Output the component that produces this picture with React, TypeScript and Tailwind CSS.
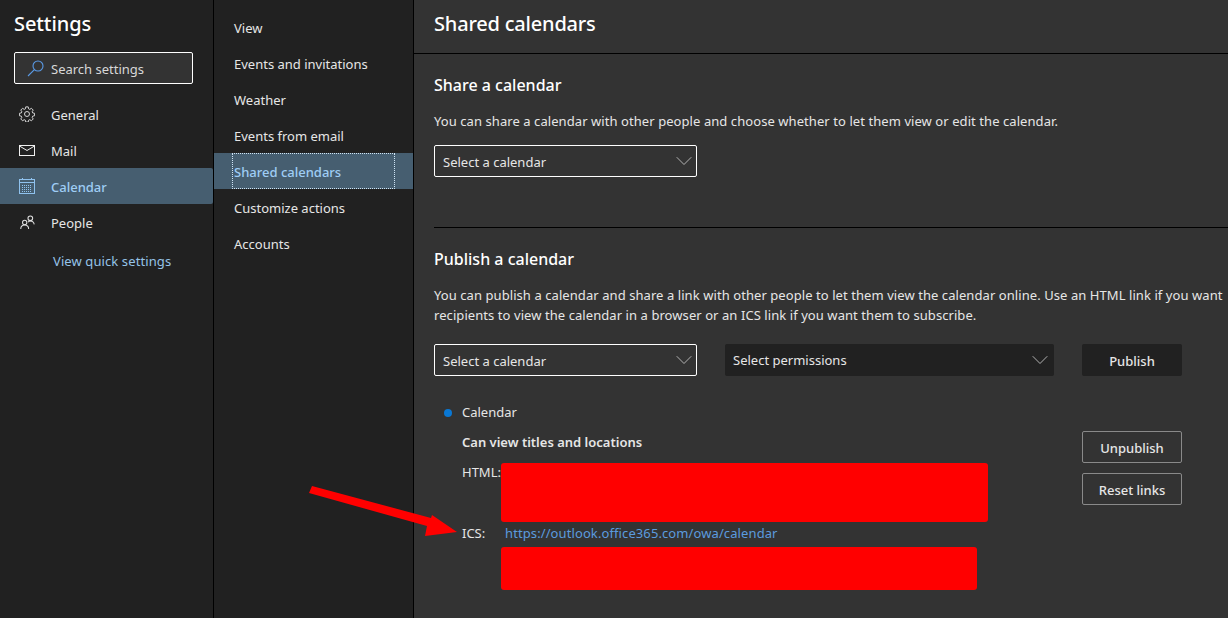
import { ChevronDown } from "lucide-react";

const font = { fontFamily: '"Noto Sans", "Open Sans", sans-serif' };

function Gear() {
  return (
    <svg width="16" height="16" viewBox="0 0 18 18" fill="none" stroke="#d8d8d8" strokeWidth="1.1">
      <circle cx="9" cy="9" r="2.8" />
      <path d="M7.6 1h2.8l.4 2.2 1.3.6 1.9-1.2 2 2-1.2 1.9.6 1.3 2.1.4v2.8l-2.1.4-.6 1.3 1.2 1.9-2 2-1.9-1.2-1.3.6-.4 2.1H7.6l-.4-2.1-1.3-.6L4 16.6l-2-2 1.2-1.9-.6-1.3L.5 11V8.2l2.1-.4.6-1.3L2 4.6l2-2 1.9 1.2 1.3-.6z" />
    </svg>
  );
}

function MailIcon() {
  return (
    <svg width="16" height="11" viewBox="0 0 16 11" fill="none" stroke="#f0f0f0" strokeWidth="1">
      <rect x="0.5" y="0.5" width="15" height="10" />
      <path d="M0.5 1l7.5 4.5 7.5-4.5" />
    </svg>
  );
}

function CalendarIcon() {
  return (
    <svg width="16" height="16" viewBox="0 0 16 16" fill="none" stroke="#8fc2ee" strokeWidth="1">
      <rect x="0.5" y="1.5" width="15" height="14" />
      <path d="M0.5 4.5h15M3.5 0v2M12.5 0v2" />
      <path d="M3 7.5h10M3 9.5h10M3 11.5h10M3 13.5h10" strokeDasharray="1 1" />
    </svg>
  );
}

function PeopleIcon() {
  return (
    <svg width="15" height="15" viewBox="0 0 16 16" fill="none" stroke="#e0e0e0" strokeWidth="1.1">
      <circle cx="5" cy="8" r="2.3" />
      <circle cx="11" cy="3.5" r="2.5" />
      <path d="M0.8 15c0-2.6 1.8-4.4 4.2-4.4s4.2 1.8 4.2 4.4M8.6 7.6c.7-.7 1.5-1.1 2.4-1.1 2.2 0 3.8 1.5 4.2 3.6" />
    </svg>
  );
}

const sideItems = [
  { label: "General", icon: <Gear /> },
  { label: "Mail", icon: <MailIcon /> },
  { label: "Calendar", icon: <CalendarIcon />, active: true },
  { label: "People", icon: <PeopleIcon /> },
];

const subItems = ["View", "Events and invitations", "Weather", "Events from email", "Shared calendars", "Customize actions", "Accounts"];

function CalendarSelect() {
  return (
    <div className="flex h-[32px] w-[263px] items-center justify-between rounded-[2px] border border-white pl-2 text-[13px]">
      <span className="pt-[4px]">Select a calendar</span>
      <ChevronDown size={28} strokeWidth={0.8} className="-mr-[2px] text-[#bbbbbb]" />
    </div>
  );
}

export default function App() {
  return (
    <div className="relative flex h-[618px] w-[1228px] overflow-hidden bg-[#333333] text-[13px] text-[#e6e6e6]" style={font}>
      <aside className="flex w-[214px] shrink-0 flex-col border-r border-black bg-[#212121]">
        <h1 className="mt-[9px] pl-[14px] text-[20px] leading-[30px] font-medium tracking-[-0.1px] text-white">Settings</h1>
        <div className="mx-[14px] mt-[13px] flex h-[32px] w-[179px] items-center rounded-[2px] border border-white bg-[#333333] pl-3">
          <svg width="18" height="18" viewBox="0 0 18 18" fill="none" stroke="#5a9ae6" strokeWidth="1.1">
            <circle cx="11" cy="7" r="5" />
            <path d="M7.4 10.6L1 17" />
          </svg>
          <span className="ml-[6px] pt-[4px] text-[#d8d8d8]">Search settings</span>
        </div>
        <nav className="mt-[12px] flex flex-col">
          {sideItems.map((item) => (
            <div
              key={item.label}
              className={`flex h-[36px] items-center rounded-r-[2px] ${item.active ? "bg-[#465e70] font-medium text-[#9fcdf5]" : ""}`}
            >
              <span className="flex w-[51px] justify-center pl-[3px]">{item.icon}</span>
              <span className="pt-[4px]">{item.label}</span>
            </div>
          ))}
        </nav>
        <a className="mt-[10px] ml-[53px] leading-[22px] tracking-[0.1px] text-[#95c3e8]">View quick settings</a>
      </aside>

      <section className="flex w-[200px] shrink-0 flex-col border-r border-black bg-[#212121] pt-[9px]">
        {subItems.map((label) =>
          label === "Shared calendars" ? (
            <div key={label} className="flex h-[36px] items-center bg-[#465e70] pl-[18px]">
              <div className="flex h-[36px] w-[163px] items-center border border-dotted border-[#cfe4f5] pt-[4px] pl-[1px] font-medium text-[#9fcdf5]">
                {label}
              </div>
            </div>
          ) : (
            <div key={label} className="flex h-[36px] items-center pt-[4px] pl-[20px]">
              {label}
            </div>
          )
        )}
      </section>

      <main className="min-w-0 flex-1">
        <header className="flex h-[54px] items-center border-b border-black pb-[6px] pl-[20px] text-[20px] font-medium tracking-[-0.2px] text-white">
          Shared calendars
        </header>
        <div className="pl-[20px]">
          <div className="h-[174px] border-b border-black pt-[19px]">
            <h2 className="text-[16px] leading-[24px] font-medium text-white">Share a calendar</h2>
            <p className="mt-[14px] leading-[20px] tracking-[0.07px] whitespace-nowrap">
              You can share a calendar with other people and choose whether to let them view or edit the calendar.
            </p>
            <div className="mt-[14px]">
              <CalendarSelect />
            </div>
          </div>

          <h2 className="mt-[19px] text-[16px] leading-[24px] font-medium text-white">Publish a calendar</h2>
          <p className="mt-[14px] w-[800px] leading-[20px] tracking-[0.07px] whitespace-nowrap">
            You can publish a calendar and share a link with other people to let them view the calendar online. Use an HTML link if you want
            <br />
            recipients to view the calendar in a browser or an ICS link if you want them to subscribe.
          </p>

          <div className="mt-[19px] flex items-center">
            <CalendarSelect />
            <div className="ml-[28px] flex h-[32px] w-[329px] items-center justify-between rounded-[2px] bg-[#212121] pl-2">
              <span className="pt-[2px]">Select permissions</span>
              <ChevronDown size={28} strokeWidth={0.8} className="text-[#bbbbbb]" />
            </div>
            <div className="ml-[28px] flex h-[32px] w-[100px] items-center justify-center rounded-[2px] bg-[#212121] pt-[4px] font-medium">Publish</div>
          </div>

          <div className="mt-[26px] flex">
            <div className="w-[648px]">
              <div className="flex h-[22px] items-center">
                <span className="ml-[10px] h-[8px] w-[8px] rounded-full bg-[#0a78d4]" />
                <span className="ml-[10px]">Calendar</span>
              </div>
              <div className="mt-[7px] ml-[28px] leading-[22px] font-semibold">Can view titles and locations</div>
              <div className="mt-[10px] ml-[28px] flex">
                <span className="-mt-[1px] w-[39px] leading-[20px]">HTML:</span>
                <div className="h-[59px] w-[487px] rounded-[3px] bg-[#ff0000]" />
              </div>
              <div className="ml-[28px] flex h-[24px] items-center">
                <span className="w-[43px]">ICS:</span>
                <a className="tracking-[0.1px] text-[#5b9bdf]">https://outlook.office365.com/owa/calendar</a>
              </div>
              <div className="mt-[1px] ml-[67px] h-[43px] w-[476px] rounded-[3px] bg-[#ff0000]" />
            </div>
            <div className="mt-[29px] flex flex-col gap-[10px]">
              <div className="flex h-[32px] w-[100px] items-center justify-center rounded-[2px] border border-[#8a8a8a] pt-[4px] font-medium">Unpublish</div>
              <div className="flex h-[32px] w-[100px] items-center justify-center rounded-[2px] border border-[#8a8a8a] pt-[4px] font-medium">Reset links</div>
            </div>
          </div>
        </div>
      </main>

      {/* annotation arrow drawn over the page */}
      <svg className="absolute top-0 left-0" width="1228" height="618" fill="none">
        <path d="M312 486L431 518L432 515L457 532L425 536L427 526L309 493Z" fill="#ff0000" />
      </svg>
    </div>
  );
}
